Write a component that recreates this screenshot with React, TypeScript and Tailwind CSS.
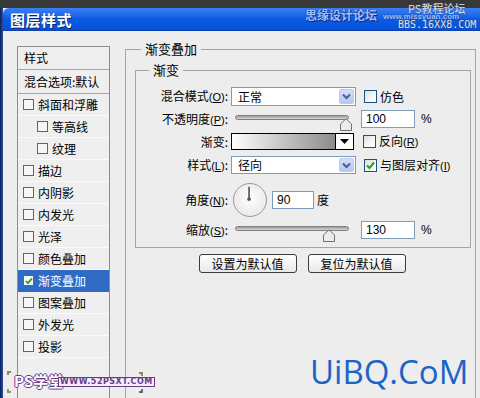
import React from "react";

const Acc = ({ pre, k, colon = true }: { pre: string; k: string; colon?: boolean }) => (
  <>
    {pre}
    <span className="font-['Liberation_Sans',sans-serif] text-[11px]">(</span>
    <span className="underline font-['Liberation_Sans',sans-serif] text-[11px]">{k}</span>
    <span className="font-['Liberation_Sans',sans-serif] text-[11px]">)</span>
    {colon ? ":" : ""}
  </>
);

const Check = ({ checked = false }: { checked?: boolean }) => (
  <div className="shrink-0 w-[13px] h-[13px] flex items-center justify-center border border-[#1c5180] bg-gradient-to-br from-[#dcdcd6] via-[#f4f4f0] to-white">
    {checked && (
      <svg width="9" height="9" viewBox="0 0 9 9">
        <path d="M1 4.5 L3.5 7 L8 1.5" fill="none" stroke="#21a121" strokeWidth="2" />
      </svg>
    )}
  </div>
);

const ListCheck = ({ checked = false }: { checked?: boolean }) => (
  <div className="shrink-0 w-[11px] h-[11px] border border-[#5b6578] bg-[#f6f6f6] flex items-center justify-center">
    {checked && (
      <svg width="8" height="8" viewBox="0 0 8 8">
        <path d="M1 4 L3 6.2 L7 1.5" fill="none" stroke="#21a121" strokeWidth="1.8" />
      </svg>
    )}
  </div>
);

const Select = ({ value }: { value: string }) => (
  <div className="w-[125px] h-full border border-[#7f9db9] bg-white flex items-stretch">
    <div className="flex-1 pl-[6px] flex items-center text-[12px] leading-none">{value}</div>
    <div className="w-[15px] m-[1px] rounded-[2px] bg-gradient-to-b from-[#d2defb] to-[#b4c8f4] border border-[#b9cbf3] flex items-center justify-center">
      <svg width="9" height="7" viewBox="0 0 9 7">
        <path d="M1 1.5 L4.5 5 L8 1.5" fill="none" stroke="#4d6185" strokeWidth="2" />
      </svg>
    </div>
  </div>
);

const Thumb = () => (
  <svg width="12" height="13" viewBox="0 0 12 13">
    <path d="M0.5 12.5 V6 L6 0.8 L11.5 6 V12.5 Z" fill="#ececec" stroke="#6e6e6e" />
  </svg>
);

const Slider = ({ pos }: { pos: number }) => (
  <div className="relative w-[122px] h-full">
    <div className="mt-[5px] mx-[4px] h-[5px] rounded-full border border-[#808080] bg-gradient-to-b from-[#9a9a9a] to-[#d8d8d8]" />
    <div className="absolute top-[3px]" style={{ left: pos }}>
      <Thumb />
    </div>
  </div>
);

const Input = ({ value, w = "w-[54px]" }: { value: string; w?: string }) => (
  <div className={`${w} h-[18px] border border-[#7f9db9] bg-white flex items-center pl-[4px] font-['Liberation_Sans',sans-serif] text-[12px] leading-none`}>
    {value}
  </div>
);

const Label = ({ children }: { children: React.ReactNode }) => (
  <div className="w-[92px] text-right text-[12px] leading-none whitespace-nowrap">{children}</div>
);

const listItems: { t: string; indent?: boolean; sel?: boolean }[] = [
  { t: "斜面和浮雕" },
  { t: "等高线", indent: true },
  { t: "纹理", indent: true },
  { t: "描边" },
  { t: "内阴影" },
  { t: "内发光" },
  { t: "光泽" },
  { t: "颜色叠加" },
  { t: "渐变叠加", sel: true },
  { t: "图案叠加" },
  { t: "外发光" },
  { t: "投影" },
];

export default function App() {
  return (
    <div className="relative w-[480px] h-[398px] overflow-hidden bg-[#ededed] flex flex-col font-['Noto_Sans_CJK_SC',sans-serif] text-black">
      <div className="h-[8px] shrink-0 bg-[#383838]" />
      <div className="flex flex-1 min-h-0">
        <div className="w-[3px] shrink-0 bg-gradient-to-r from-[#0c1f55] to-[#2a4fa8]" />
        <div className="flex-1 flex flex-col min-w-0">
          <div className="h-[23px] shrink-0 rounded-tl-[6px] bg-gradient-to-b from-[#3a80f2] via-[#0a5ce4] to-[#0650d6] border-b border-[#0a3fb0] flex items-center pl-[7px]">
            <span className="text-white font-bold text-[15px] leading-none tracking-[0.5px] [text-shadow:1px_1px_0_#0a2a70]">
              图层样式
            </span>
          </div>
          <div className="flex-1 flex items-start pl-[14px] pt-[10px]">
            {/* Left list */}
            <div className="mt-[5px] w-[93px] h-[400px] shrink-0 border border-[#8c8c8c] bg-[#efefef] flex flex-col text-[12px] leading-none">
              <div className="h-[23px] border-b border-[#a8a8a8] flex items-center pl-[6px]">样式</div>
              <div className="h-[24px] border-b border-[#a8a8a8] flex items-center pl-[6px] whitespace-nowrap">混合选项:默认</div>
              {listItems.map((it) => (
                <div
                  key={it.t}
                  className={`h-[22px] flex items-center gap-[4px] border-b ${
                    it.sel ? "bg-[#316ac5] text-white border-[#316ac5]" : "border-[#fafafa]"
                  } ${it.indent ? "pl-[19px]" : "pl-[5px]"}`}
                >
                  <ListCheck checked={it.sel} />
                  <span>{it.t}</span>
                </div>
              ))}
            </div>

            {/* Right panel */}
            <fieldset className="ml-[15px] w-[351px] h-[400px] shrink-0 border border-[#a5a5a5] pl-[9px] pr-[3px] pt-[5px]">
              <legend className="ml-[6px] px-[4px] text-[13px] leading-[16px]">渐变叠加</legend>
              <fieldset className="w-[336px] border border-[#a5a5a5] pt-[9px] pb-[8px]">
                <legend className="ml-[13px] px-[4px] text-[13px] leading-[16px]">渐变</legend>

                <div className="flex items-center h-[19px]">
                  <Label>
                    <Acc pre="混合模式" k="O" />
                  </Label>
                  <div className="ml-[3px] h-full">
                    <Select value="正常" />
                  </div>
                  <div className="ml-[8px] flex items-center gap-[3px] text-[12px] leading-none">
                    <Check />
                    <span>仿色</span>
                  </div>
                </div>

                <div className="flex items-center h-[18px] mt-[4px]">
                  <Label>
                    <Acc pre="不透明度" k="P" />
                  </Label>
                  <div className="ml-[3px] h-full">
                    <Slider pos={109} />
                  </div>
                  <div className="ml-[8px]">
                    <Input value="100" />
                  </div>
                  <span className="ml-[6px] text-[12px] leading-none font-['Liberation_Sans',sans-serif]">%</span>
                </div>

                <div className="flex items-center h-[17px] mt-[5px]">
                  <Label>渐变:</Label>
                  <div className="ml-[3px] w-[123px] h-full border border-black flex">
                    <div className="flex-1 bg-gradient-to-r from-white to-[#8c8c8c]" />
                    <div className="w-[18px] border-l border-black bg-white flex items-center justify-center">
                      <svg width="9" height="5" viewBox="0 0 9 5">
                        <path d="M0 0 H9 L4.5 5 Z" fill="#000" />
                      </svg>
                    </div>
                  </div>
                  <div className="ml-[9px] flex items-center gap-[3px] text-[12px] leading-none">
                    <Check />
                    <span>
                      <Acc pre="反向" k="R" colon={false} />
                    </span>
                  </div>
                </div>

                <div className="flex items-center h-[18px] mt-[6px]">
                  <Label>
                    <Acc pre="样式" k="L" />
                  </Label>
                  <div className="ml-[3px] h-full">
                    <Select value="径向" />
                  </div>
                  <div className="ml-[8px] flex items-center gap-[3px] text-[12px] leading-none">
                    <Check checked />
                    <span>
                      <Acc pre="与图层对齐" k="I" colon={false} />
                    </span>
                  </div>
                </div>

                <div className="flex items-center h-[34px] mt-[9px]">
                  <Label>
                    <Acc pre="角度" k="N" />
                  </Label>
                  <div className="ml-[5px] w-[34px] h-[34px] rounded-full border border-[#9a9a9a] bg-[radial-gradient(circle_at_50%_45%,#ffffff,#e2e2e2)] flex items-center justify-center">
                    <svg width="34" height="34" viewBox="0 0 34 34">
                      <line x1="16" y1="16" x2="16" y2="3" stroke="#6a6a6a" strokeWidth="2" />
                      <circle cx="16" cy="16" r="2" fill="#555" />
                    </svg>
                  </div>
                  <div className="ml-[5px]">
                    <Input value="90" w="w-[42px]" />
                  </div>
                  <span className="ml-[3px] text-[12px] leading-none">度</span>
                </div>

                <div className="flex items-center h-[18px] mt-[4px]">
                  <Label>
                    <Acc pre="缩放" k="S" />
                  </Label>
                  <div className="ml-[3px] h-full">
                    <Slider pos={92} />
                  </div>
                  <div className="ml-[8px]">
                    <Input value="130" />
                  </div>
                  <span className="ml-[6px] text-[12px] leading-none font-['Liberation_Sans',sans-serif]">%</span>
                </div>
              </fieldset>

              <div className="flex justify-center gap-[11px] mt-[6px] pr-[3px]">
                <div className="w-[98px] h-[19px] rounded-[3px] border border-[#3c3c3c] bg-gradient-to-b from-white to-[#e8e8e8] flex items-center justify-center text-[12px] leading-none">
                  设置为默认值
                </div>
                <div className="w-[98px] h-[19px] rounded-[3px] border border-[#3c3c3c] bg-gradient-to-b from-white to-[#e8e8e8] flex items-center justify-center text-[12px] leading-none">
                  复位为默认值
                </div>
              </div>
            </fieldset>
          </div>
        </div>
      </div>

      {/* Title bar watermarks */}
      <div className="absolute left-[305px] top-[8px] text-[12px] leading-[14px] font-bold text-[#9fc0ff] [text-shadow:0_0_1px_#0a2a80,1px_1px_0_#0a2a80]">
        思缘设计论坛
      </div>
      <div className="absolute left-[383px] top-[14px] text-[8px] leading-[6px] font-bold text-[#9fc0ff] font-['Liberation_Sans',sans-serif] [text-shadow:0_0_1px_#0a2a80]">
        www.missyuan.com
      </div>
      <div className="absolute left-[408px] top-[3px] text-[11px] leading-[11px] text-[#d8dde8] [text-shadow:0_0_1px_#555]">
        PS教程论坛
      </div>
      <div className="absolute left-[398px] top-[21px] text-[10px] leading-[8px] text-[#e0e4ec] font-['DejaVu_Sans_Mono',monospace] [text-shadow:0_0_1px_#333]">
        BBS.16XX8.COM
      </div>

      {/* Bottom-left watermark */}
      <div className="absolute left-[7px] top-[371px] w-[4px] h-[4px] border-l-2 border-t-2 border-[#8a8a5a]" />
      <div className="absolute left-[7px] top-[389px] w-[4px] h-[4px] border-l-2 border-b-2 border-[#8a9a6a]" />
      <div className="absolute left-[139px] top-[372px] w-[4px] h-[4px] border-r-2 border-t-2 border-[#8a8a5a]" />
      <div className="absolute left-[139px] top-[389px] w-[4px] h-[4px] border-r-2 border-b-2 border-[#6a6a6a]" />
      <div className="absolute left-[14px] top-[372px] text-[15px] leading-[17px] font-bold text-white [text-shadow:1px_0_0_#6a3a8a,-1px_0_0_#6a3a8a,0_1px_0_#6a3a8a,0_-1px_0_#6a3a8a]">
        PS学堂
      </div>
      <div className="absolute left-[58px] top-[377px] h-[10px] px-[1px] border border-[#6a3a8a] bg-[#f4eef8] text-[8px] leading-[8px] font-bold text-[#6a3a8a] font-['DejaVu_Sans',sans-serif] tracking-[0.5px]">
        WWW.52PSXT.COM
      </div>

      {/* UiBQ watermark */}
      <div className="absolute left-[310px] top-[354px] text-[33px] leading-[36px] text-[#1a64c6] font-['Open_Sans',sans-serif]">
        UiBQ.CoM
      </div>
    </div>
  );
}
